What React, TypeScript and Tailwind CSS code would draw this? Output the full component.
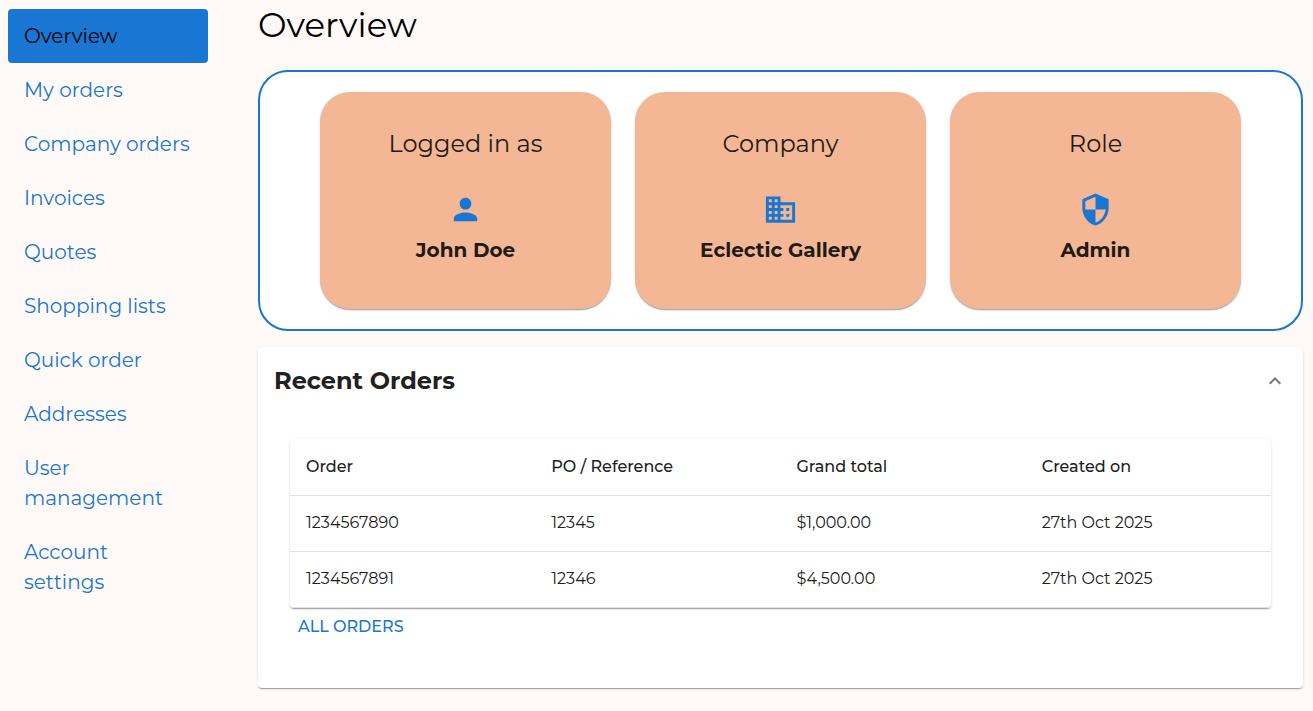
import { useState } from 'react';

const links = [
  'Overview',
  'My orders',
  'Company orders',
  'Invoices',
  'Quotes',
  'Shopping lists',
  'Quick order',
  'Addresses',
  'User management',
  'Account settings',
];

const cards = [
  {
    title: 'Logged in as',
    value: 'John Doe',
    icon: 'M12 12c2.21 0 4-1.79 4-4s-1.79-4-4-4-4 1.79-4 4 1.79 4 4 4m0 2c-2.67 0-8 1.34-8 4v2h16v-2c0-2.66-5.33-4-8-4',
  },
  {
    title: 'Company',
    value: 'Eclectic Gallery',
    icon: 'M12 7V3H2v18h20V7zM6 19H4v-2h2zm0-4H4v-2h2zm0-4H4V9h2zm0-4H4V5h2zm4 12H8v-2h2zm0-4H8v-2h2zm0-4H8V9h2zm0-4H8V5h2zm10 12h-8v-2h2v-2h-2v-2h2v-2h-2V9h8zm-2-8h-2v2h2zm0 4h-2v2h2z',
  },
  {
    title: 'Role',
    value: 'Admin',
    icon: 'M12 1 3 5v6c0 5.55 3.84 10.74 9 12 5.16-1.26 9-6.45 9-12V5zm0 10.99h7c-.53 4.12-3.28 7.79-7 8.94V12H5V6.3l7-3.11z',
  },
];

const columns = ['Order', 'PO / Reference', 'Grand total', 'Created on'];

const orders = [
  ['1234567890', '12345', '$1,000.00', '27th Oct 2025'],
  ['1234567891', '12346', '$4,500.00', '27th Oct 2025'],
];

const paper =
  'shadow-[0_2px_1px_-1px_rgba(0,0,0,0.2),0_1px_1px_0_rgba(0,0,0,0.14),0_1px_3px_0_rgba(0,0,0,0.12)]';

export default function App() {
  const [open, setOpen] = useState(true);

  return (
    <div className="flex min-h-screen items-start bg-[#fffaf7] pr-[10px] pl-2 font-[Montserrat,Inter,sans-serif] text-[#212121]">
      <nav className="mt-[9px] w-[200px] shrink-0">
        {links.map((link, idx) => (
          <a
            key={link}
            href="#"
            className={
              idx === 0
                ? 'block rounded bg-[#1976d2] px-4 py-3 text-xl leading-[30px] text-black'
                : 'block rounded px-4 py-3 text-xl leading-[30px] text-[#1976d2]'
            }
          >
            {link}
          </a>
        ))}
      </nav>

      <main className="ml-[50px] min-w-0 flex-1 pb-5">
        <h1 className="mb-5 text-[34px] leading-[50px] text-black">Overview</h1>

        <section className="grid grid-cols-3 gap-6 rounded-[30px] border-2 border-[#1976d2] bg-white px-[60px] py-5">
          {cards.map((card) => (
            <div
              key={card.title}
              className={`flex flex-col items-center rounded-[30px] bg-[#f4b795] pt-[34px] pb-11 text-[#211b15] ${paper}`}
            >
              <h2 className="mb-[30px] text-2xl leading-9">{card.title}</h2>
              <svg viewBox="0 0 24 24" className="mb-2 size-[35px] fill-[#1976d2]" aria-hidden="true">
                <path d={card.icon} />
              </svg>
              <p className="text-xl leading-[30px] font-bold">{card.value}</p>
            </div>
          ))}
        </section>

        <section className={`mt-4 rounded bg-white ${paper}`}>
          <h2>
            <button
              type="button"
              aria-expanded={open}
              onClick={() => setOpen(!open)}
              className="flex w-full items-center justify-between px-4 py-4 text-left text-2xl leading-9 font-bold"
            >
              Recent Orders
              <svg
                viewBox="0 0 24 24"
                className={open ? 'size-6 rotate-180 fill-[#757575]' : 'size-6 fill-[#757575]'}
                aria-hidden="true"
              >
                <path d="M16.59 8.59 12 13.17 7.41 8.59 6 10l6 6 6-6z" />
              </svg>
            </button>
          </h2>
          {open && (
            <div className="px-8 pt-6 pb-[42px]">
              <div className={`rounded ${paper}`}>
                <table className="w-full table-fixed text-left text-base leading-6">
                  <thead>
                    <tr className="h-14 border-b border-[#e0e0e0]">
                      {columns.map((column) => (
                        <th key={column} className="px-4 font-medium">
                          {column}
                        </th>
                      ))}
                    </tr>
                  </thead>
                  <tbody>
                    {orders.map((order) => (
                      <tr key={order[0]} className="h-14 border-b border-[#e0e0e0]">
                        {order.map((cell, idx) => (
                          <td key={idx} className="px-4">
                            {cell}
                          </td>
                        ))}
                      </tr>
                    ))}
                  </tbody>
                </table>
              </div>
              <button type="button" className="px-2 py-[6px] text-base leading-[26px] font-medium text-[#1976d2] uppercase">
                All orders
              </button>
            </div>
          )}
        </section>
      </main>
    </div>
  );
}
